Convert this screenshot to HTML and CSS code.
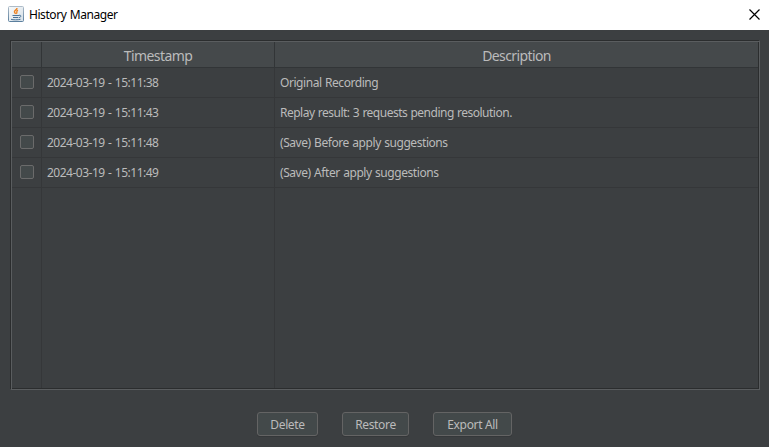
FILE: index.html
```html
<!DOCTYPE html>
<html lang="en">
<head>
<meta charset="utf-8">
<title>History Manager</title>
<link rel="stylesheet" href="styles.css">
</head>
<body>
<header class="titlebar">
  <svg class="logo" width="16" height="16" viewBox="0 0 16 16">
    <defs>
      <linearGradient id="frame" x1="0" y1="0" x2="0" y2="1"><stop offset="0" stop-color="#aebcc9"/><stop offset="1" stop-color="#5b7f9e"/></linearGradient>
      <linearGradient id="tile" x1="0" y1="0" x2="1" y2="1"><stop offset="0" stop-color="#f8fafa"/><stop offset="1" stop-color="#d5dfe7"/></linearGradient>
    </defs>
    <rect x=".5" y=".5" width="15" height="15" rx="1" fill="url(#tile)" stroke="url(#frame)"/>
    <path d="M9 2C9.200 4 5.600 4.400 6.500 6.200L7.600 7.900M10 4.200C7.500 5.200 9.800 6.200 8.400 7.800" fill="none" stroke="#ee8322" stroke-width="1.400"/>
    <path d="M4.500 9.500h6.500M5 11.500h5.300M3 13.300c2 .7 7 .7 9.500 0M11 9.300c2.600-.6 2.400 2 0 2.300" fill="none" stroke="#4a7397" stroke-width="1"/>
  </svg>
  <h1 class="title">History Manager</h1>
  <svg class="close" width="11" height="11" viewBox="0 0 11 11"><path d="M.5 .5l10 10M10.500 .5l-10 10" fill="none" stroke="#000" stroke-width="1.200"/></svg>
</header>
<main class="content">
  <div class="table">
    <div class="row head"><div class="cell"></div><div class="cell"><span>Timestamp</span></div><div class="cell"><span>Description</span></div></div>
    <div class="row"><div class="cell"><i class="check"></i></div><div class="cell"><span class="time">2024-03-19 - 15:11:38</span></div><div class="cell"><span>Original Recording</span></div></div>
    <div class="row"><div class="cell"><i class="check"></i></div><div class="cell"><span class="time">2024-03-19 - 15:11:43</span></div><div class="cell"><span class="tight">Replay result: 3 requests pending resolution.</span></div></div>
    <div class="row"><div class="cell"><i class="check"></i></div><div class="cell"><span class="time">2024-03-19 - 15:11:48</span></div><div class="cell"><span>(Save) Before apply suggestions</span></div></div>
    <div class="row"><div class="cell"><i class="check"></i></div><div class="cell"><span class="time">2024-03-19 - 15:11:49</span></div><div class="cell"><span>(Save) After apply suggestions</span></div></div>
    <div class="row rest"><div class="cell"></div><div class="cell"></div><div class="cell"></div></div>
  </div>
  <div class="actions">
    <button class="btn delete">Delete</button>
    <button class="btn restore">Restore</button>
    <button class="btn export">Export All</button>
  </div>
</main>
</body>
</html>
```
FILE: styles.css
```css
* { box-sizing: border-box; }
body {
  margin: 0;
  height: 447px;
  display: flex;
  flex-direction: column;
  background: #3c3f41;
  color: #bbbbbb;
  font: 12px/16px "Noto Sans", "Open Sans", sans-serif;
  letter-spacing: -0.44px;
  word-spacing: 0.7px;
  overflow: hidden;
}
.titlebar {
  height: 30px;
  display: flex;
  align-items: center;
  padding: 0 9px 2px 8px;
  background: #fff;
  color: #000;
}
.title { margin: 2px auto 0 5px; font-size: 12px; font-weight: 400; }
.content { flex: 1; display: flex; flex-direction: column; padding: 10px 9px 0 10px; }
.table {
  height: 350px;
  display: flex;
  flex-direction: column;
  border: 1px solid;
  border-color: #2b2d2e #5a5d5f #5a5d5f #2b2d2e;
  box-shadow: inset 1px 1px #5a5d5f, inset -1px -1px #2b2d2e;
  padding: 1px;
}
.row { display: grid; grid-template-columns: 30px 233px 1fr; height: 30px; flex: none; }
.cell {
  display: flex;
  align-items: center;
  padding-left: 5px;
  border-right: 1px solid #353739;
  border-bottom: 1px solid #353739;
  white-space: nowrap;
}
.cell:first-child { padding-left: 8px; }
.cell:last-child { border-right: 0; }
.time { letter-spacing: -0.5px; word-spacing: 0.8px; }
.tight { letter-spacing: -0.5px; word-spacing: 0.6px; }
.head { height: 26px; font-size: 14px; letter-spacing: -0.6px; background: #45494b; }
.head .cell { justify-content: center; padding: 3px 0 0; border-color: #323537; }
.rest { flex: 1; height: auto; }
.rest .cell { border-bottom: 0; }
.check { width: 14px; height: 14px; margin-bottom: 1px; border: 1px solid #6b6b6b; border-radius: 2px; background: #43494a; }
.actions { display: flex; justify-content: center; gap: 24px; margin-top: 22px; padding-right: 1px; }
.btn {
  height: 24px;
  padding: 1px 0 0;
  border: 1px solid #646464;
  border-radius: 3px;
  background: #43494a;
  box-shadow: 0 1px #35383a;
  color: inherit;
  font: inherit;
  letter-spacing: -0.35px;
}
.delete { width: 61px; }
.restore { width: 67px; }
.export { width: 79px; }
```
